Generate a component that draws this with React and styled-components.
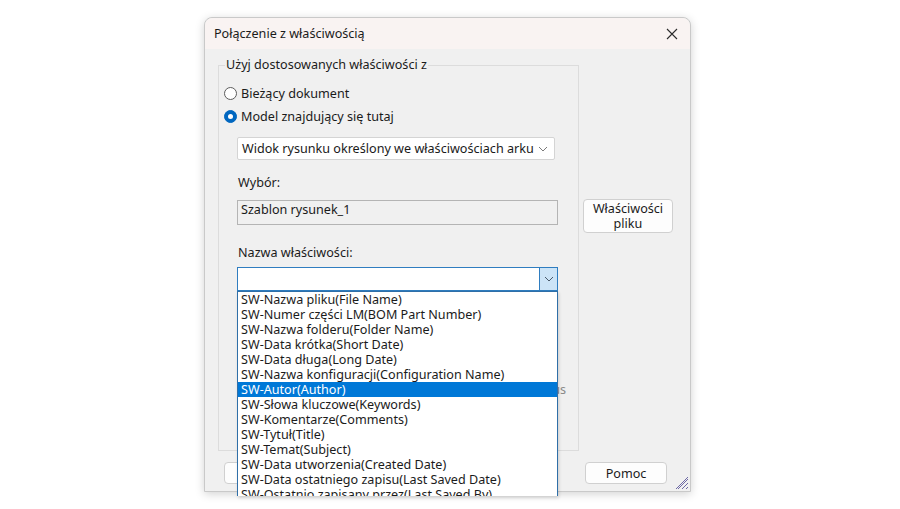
import React from "react";
import styled, { createGlobalStyle } from "styled-components";

const Global = createGlobalStyle`
  html, body { margin: 0; padding: 0; background: #ffffff; }
  body { font-family: "Noto Sans", "Open Sans", sans-serif; font-size: 12.6px; color: #1a1a1a; }
`;

const Page = styled.div`
  width: 900px;
  height: 509px;
  padding: 17px 0 0 204px;
  box-sizing: border-box;
  overflow: hidden;
`;

const Dialog = styled.div`
  position: relative;
  width: 487px;
  height: 475px;
  box-sizing: border-box;
  border: 1px solid #c9c9c9;
  border-radius: 8px 8px 0 0;
  background: #f0f0f0;
  box-shadow: 0 2px 10px rgba(0, 0, 0, 0.18);
  display: flex;
  flex-direction: column;
`;

const TitleBar = styled.div`
  height: 31px;
  flex: none;
  display: flex;
  align-items: center;
  justify-content: space-between;
  padding: 0 6px 0 9px;
  background: #f9f3f2;
  border-radius: 8px 8px 0 0;
  font-size: 12.6px;
  color: #1b1b1b;
`;

const CloseBtn = styled.div`
  width: 24px;
  height: 24px;
  display: flex;
  align-items: center;
  justify-content: center;
`;

const Body = styled.div`
  flex: 1;
  display: flex;
  flex-direction: column;
  padding: 8px 0 0 13px;
`;

const TopRow = styled.div`
  display: flex;
  gap: 4px;
`;

const GroupBox = styled.fieldset`
  margin: 0;
  width: 361px;
  height: 394px;
  box-sizing: border-box;
  border: 1px solid #dcdcdc;
  padding: 9px 0 0 5px;
  display: flex;
  flex-direction: column;
`;

const Legend = styled.legend`
  padding: 0 1px;
  margin-left: 1px;
  line-height: 16px;
  font-size: 12.6px;
  color: #1b1b1b;
`;

const RadioRow = styled.label`
  display: flex;
  align-items: center;
  gap: 4px;
  height: 23px;
  font-size: 12.6px;
`;

const RadioCircle = styled.span`
  width: 13px;
  height: 13px;
  box-sizing: border-box;
  border-radius: 50%;
  flex: none;
  ${(p) =>
    p.$checked
      ? `background: #0067c0; border: 1px solid #0067c0; display:flex; align-items:center; justify-content:center;`
      : `background: #ffffff; border: 1px solid #5c5c5c;`}
`;

const RadioDot = styled.span`
  width: 5px;
  height: 5px;
  border-radius: 50%;
  background: #ffffff;
`;

const Indented = styled.div`
  margin-left: 13px;
  margin-top: ${(p) => p.$mt || 0}px;
`;

const Combo = styled.div`
  width: 318px;
  height: 23px;
  box-sizing: border-box;
  display: flex;
  align-items: center;
  justify-content: space-between;
  background: #ffffff;
  border: 1px solid #d4d4d4;
  border-radius: 2px;
  padding: 0 6px 0 4px;
  font-size: 12.6px;
  white-space: nowrap;
  overflow: hidden;
`;

const Label = styled.div`
  line-height: 16px;
  font-size: 12.6px;
  color: #1b1b1b;
  padding-left: 1px;
`;

const ReadOnlyBox = styled.div`
  width: 321px;
  height: 25px;
  box-sizing: border-box;
  border: 1px solid #b4b4b4;
  background: #f0f0f0;
  padding: 1px 3px;
  line-height: 16px;
  font-size: 12.6px;
`;

const EditCombo = styled.div`
  width: 321px;
  height: 24px;
  box-sizing: border-box;
  display: flex;
  background: #ffffff;
  border: 1px solid #2f7dc0;
`;

const EditField = styled.div`
  flex: 1;
`;

const DropBtn = styled.div`
  width: 17px;
  flex: none;
  background: #cce4f7;
  border-left: 1px solid #2f7dc0;
  display: flex;
  align-items: center;
  justify-content: center;
`;

const HiddenRow = styled.div`
  margin-top: 91px;
  padding-right: 12px;
  text-align: right;
  color: #8a8a8a;
  line-height: 16px;
  font-size: 12.6px;
`;

const RightCol = styled.div`
  padding-top: 142px;
  display: flex;
  flex-direction: column;
`;

const Button = styled.div`
  width: ${(p) => p.$w || 82}px;
  height: ${(p) => p.$h || 22}px;
  box-sizing: border-box;
  background: #fdfdfd;
  border: 1px solid #d0d0d0;
  border-radius: 4px;
  display: flex;
  align-items: center;
  justify-content: center;
  text-align: center;
  line-height: 15px;
  font-size: 12.6px;
  color: #1b1b1b;
`;

const ButtonRow = styled.div`
  display: flex;
  justify-content: space-between;
  margin-top: 11px;
  padding: 0 23px 0 6px;
`;

const ButtonGroup = styled.div`
  display: flex;
  gap: 8px;
`;

const Grip = styled.div`
  position: absolute;
  right: 1px;
  bottom: 1px;
  width: 14px;
  height: 14px;
`;

const List = styled.div`
  position: absolute;
  left: 32px;
  top: 273px;
  width: 321px;
  height: 205px;
  box-sizing: border-box;
  border: 1px solid #2f6fa8;
  border-bottom: none;
  background: #ffffff;
  overflow: hidden;
  box-shadow: 1px 2px 3px rgba(0, 0, 0, 0.15);
`;

const Item = styled.div`
  height: 15px;
  line-height: 15px;
  padding-left: 3px;
  font-size: 12.6px;
  white-space: nowrap;
  color: ${(p) => (p.$sel ? "#ffffff" : "#1b1b1b")};
  background: ${(p) => (p.$sel ? "#0078d7" : "transparent")};
`;

const items = [
  "SW-Nazwa pliku(File Name)",
  "SW-Numer części LM(BOM Part Number)",
  "SW-Nazwa folderu(Folder Name)",
  "SW-Data krótka(Short Date)",
  "SW-Data długa(Long Date)",
  "SW-Nazwa konfiguracji(Configuration Name)",
  "SW-Autor(Author)",
  "SW-Słowa kluczowe(Keywords)",
  "SW-Komentarze(Comments)",
  "SW-Tytuł(Title)",
  "SW-Temat(Subject)",
  "SW-Data utworzenia(Created Date)",
  "SW-Data ostatniego zapisu(Last Saved Date)",
  "SW-Ostatnio zapisany przez(Last Saved By)",
];

const Chevron = ({ color = "#606060" }) => (
  <svg width="10" height="6" viewBox="0 0 10 6">
    <path d="M1 1 L5 5 L9 1" fill="none" stroke={color} strokeWidth="1" />
  </svg>
);

export default function App() {
  return (
    <>
      <Global />
      <Page>
        <Dialog>
          <TitleBar>
            <span>Połączenie z właściwością</span>
            <CloseBtn>
              <svg width="12" height="12" viewBox="0 0 12 12">
                <path d="M1 1 L11 11 M11 1 L1 11" stroke="#2b2b2b" strokeWidth="1.1" />
              </svg>
            </CloseBtn>
          </TitleBar>
          <Body>
            <TopRow>
              <GroupBox>
                <Legend>Użyj dostosowanych właściwości z</Legend>
                <RadioRow>
                  <RadioCircle />
                  Bieżący dokument
                </RadioRow>
                <RadioRow>
                  <RadioCircle $checked>
                    <RadioDot />
                  </RadioCircle>
                  Model znajdujący się tutaj
                </RadioRow>
                <Indented $mt={9}>
                  <Combo>
                    <span>Widok rysunku określony we właściwościach arku</span>
                    <Chevron color="#7a7a7a" />
                  </Combo>
                </Indented>
                <Indented $mt={15}>
                  <Label>Wybór:</Label>
                </Indented>
                <Indented $mt={9}>
                  <ReadOnlyBox>Szablon rysunek_1</ReadOnlyBox>
                </Indented>
                <Indented $mt={20}>
                  <Label>Nazwa właściwości:</Label>
                </Indented>
                <Indented $mt={6}>
                  <EditCombo>
                    <EditField />
                    <DropBtn>
                      <Chevron color="#4a5a6a" />
                    </DropBtn>
                  </EditCombo>
                </Indented>
                <HiddenRow>Wyświetl jako Status</HiddenRow>
              </GroupBox>
              <RightCol>
                <Button $w={90} $h={34}>
                  Właściwości
                  <br />
                  pliku
                </Button>
              </RightCol>
            </TopRow>
            <ButtonRow>
              <ButtonGroup>
                <Button>OK</Button>
                <Button>Anuluj</Button>
              </ButtonGroup>
              <Button>Pomoc</Button>
            </ButtonRow>
          </Body>
          <Grip>
            <svg width="14" height="14" viewBox="0 0 14 14">
              <path d="M13 3 L3 13 M13 7 L7 13 M13 11 L11 13 M13 1 L1 13" stroke="#6e6aa6" strokeWidth="1" />
            </svg>
          </Grip>
          <List>
            {items.map((t) => (
              <Item key={t} $sel={t === "SW-Autor(Author)"}>
                {t}
              </Item>
            ))}
          </List>
        </Dialog>
      </Page>
    </>
  );
}
